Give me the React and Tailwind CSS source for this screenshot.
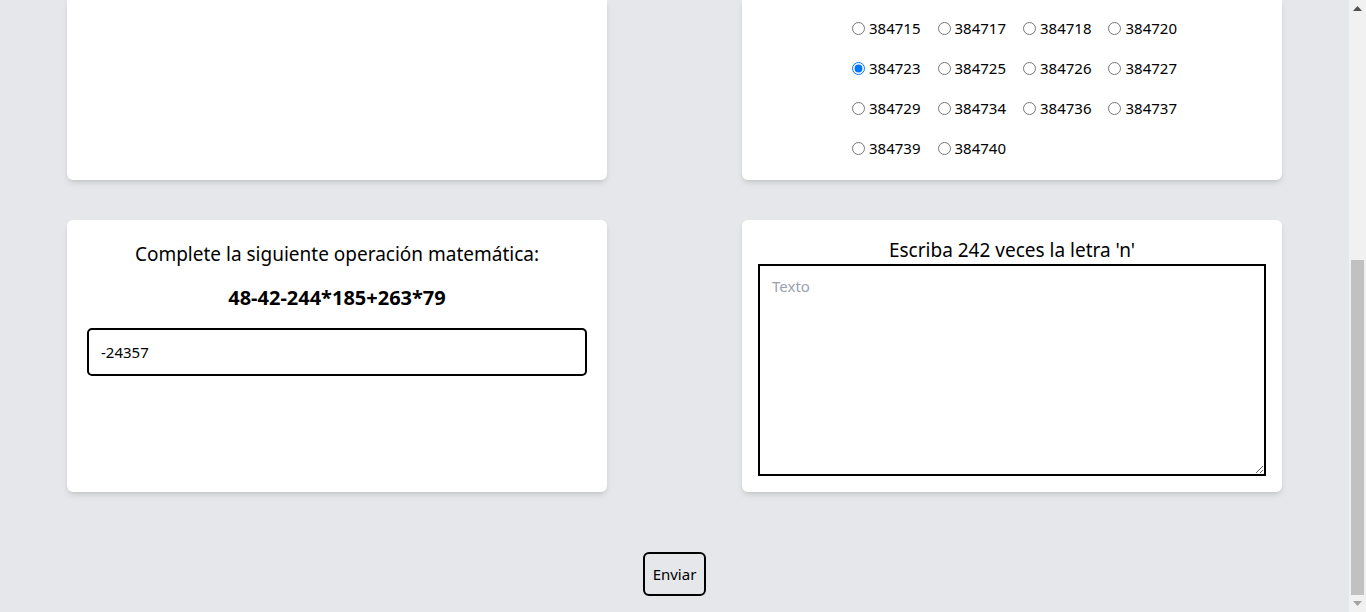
import { useState } from "react";

const CODES = [
  "384715", "384717", "384718", "384720",
  "384723", "384725", "384726", "384727",
  "384729", "384734", "384736", "384737",
  "384739", "384740",
];

function Scrollbar() {
  return (
    <div className="flex w-[17px] shrink-0 flex-col bg-[#f1f1f1]">
      <div className="flex h-[17px] items-center justify-center">
        <svg width="9" height="5" viewBox="0 0 9 5">
          <path d="M4.5 0 L9 5 L0 5 Z" fill="#505050" />
        </svg>
      </div>
      <div className="mx-[2px] mt-[243px] flex-1 bg-[#c1c1c1]" />
      <div className="flex h-[17px] items-center justify-center">
        <svg width="9" height="5" viewBox="0 0 9 5">
          <path d="M0 0 L9 0 L4.5 5 Z" fill="#a3a3a3" />
        </svg>
      </div>
    </div>
  );
}

export default function App() {
  const [answer, setAnswer] = useState("-24357");
  const [text, setText] = useState("");

  return (
    <div className="flex h-[612px] overflow-hidden bg-[#e5e7eb] font-['Noto_Sans',sans-serif] text-black">
      <main className="flex flex-1 flex-col px-[67px]">
        <div className="grid grid-cols-2 gap-x-[135px] gap-y-10">
          {/* cards scrolled partly out of view */}
          <section className="rounded-b-md bg-white shadow-md" />
          <section className="rounded-b-md bg-white pt-4 pb-5 shadow-md">
            <div className="mx-auto grid w-fit grid-cols-4 gap-x-3 gap-y-4">
              {CODES.map((code) => (
                <label key={code} className="flex h-6 items-center text-[15px]">
                  <input
                    type="radio"
                    name="codigo"
                    value={code}
                    defaultChecked={code === "384723"}
                    className="ml-[5px] mr-[4px] h-[13px] w-[13px]"
                  />
                  {code}
                </label>
              ))}
            </div>
          </section>

          <section className="rounded-md bg-white p-5 text-center shadow-md">
            <h2 className="text-[19px] leading-7">Complete la siguiente operación matemática:</h2>
            <p className="mt-4 text-xl leading-7 font-bold">48-42-244*185+263*79</p>
            <input
              type="text"
              value={answer}
              onChange={(e) => setAnswer(e.target.value)}
              className="mt-4 h-12 w-full rounded-[5px] border-2 border-black px-3 text-[15px]"
            />
          </section>

          <section className="rounded-md bg-white p-4 shadow-md">
            <h2 className="text-center text-[19px] leading-7">Escriba 242 veces la letra 'n'</h2>
            <textarea
              value={text}
              onChange={(e) => setText(e.target.value)}
              placeholder="Texto"
              className="block h-[212px] w-full border-2 border-black px-3 pt-[9px] text-[15px] placeholder:text-gray-400"
            />
          </section>
        </div>

        <div className="mt-[60px] flex justify-center">
          <button type="button" className="rounded-md border-2 border-black px-2 py-2 text-[15px] leading-6">
            Enviar
          </button>
        </div>
      </main>
      <Scrollbar />
    </div>
  );
}
